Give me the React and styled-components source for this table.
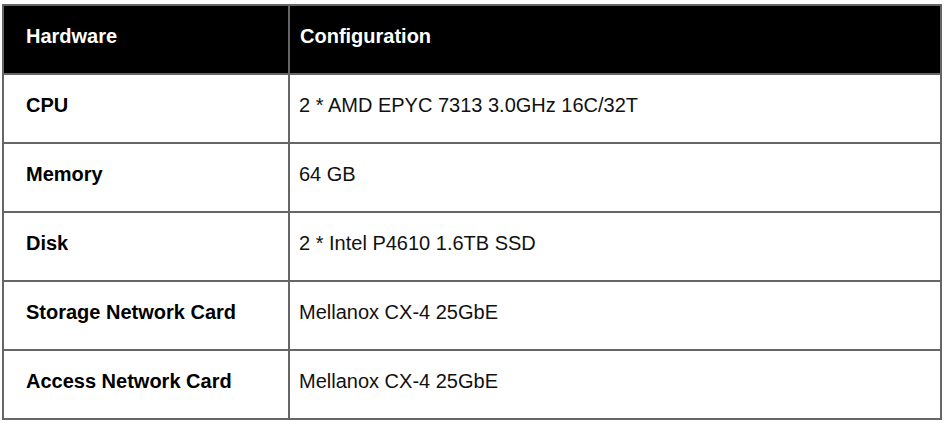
import styled, { createGlobalStyle } from "styled-components";

const rows = [
  { name: "CPU", value: "2 * AMD EPYC 7313 3.0GHz 16C/32T" },
  { name: "Memory", value: "64 GB" },
  { name: "Disk", value: "2 * Intel P4610 1.6TB SSD" },
  { name: "Storage Network Card", value: "Mellanox CX-4 25GbE" },
  { name: "Access Network Card", value: "Mellanox CX-4 25GbE" },
];

export default function App() {
  return (
    <>
      <GlobalStyle />
      <Page>
        <SpecTable>
          <thead>
            <tr>
              <HeadCell first>Hardware</HeadCell>
              <HeadCell>Configuration</HeadCell>
            </tr>
          </thead>
          <tbody>
            {rows.map((row) => (
              <tr key={row.name}>
                <NameCell>{row.name}</NameCell>
                <ValueCell>{row.value}</ValueCell>
              </tr>
            ))}
          </tbody>
        </SpecTable>
      </Page>
    </>
  );
}

const GlobalStyle = createGlobalStyle`
  html, body {
    margin: 0;
    background: #fff;
  }
  body {
    font-family: "Liberation Sans", Arial, sans-serif;
    color: #000;
  }
`;

const Page = styled.div`
  padding: 4px 0 0 2px;
`;

const SpecTable = styled.table`
  width: 940px;
  border-collapse: separate;
  border-spacing: 0;
  border-top: 2px solid #666;
  border-left: 2px solid #666;
  table-layout: fixed;
`;

const Cell = styled.td`
  height: 69px;
  box-sizing: border-box;
  padding: 19px 10px 0 10px;
  vertical-align: top;
  font-size: 20px;
  line-height: 23px;
  border-right: 2px solid #666;
  border-bottom: 2px solid #666;
  text-align: left;
`;

const HeadCell = styled(Cell).attrs({ as: "th" })`
  background: #000;
  color: #fff;
  font-weight: bold;
  width: ${(p) => (p.first ? "286px" : "auto")};
  padding-left: ${(p) => (p.first ? "22px" : "10px")};
`;

const NameCell = styled(Cell)`
  font-weight: bold;
  padding-left: 22px;
`;

const ValueCell = styled(Cell)`
  padding-left: 9px;
  color: #111;
`;
